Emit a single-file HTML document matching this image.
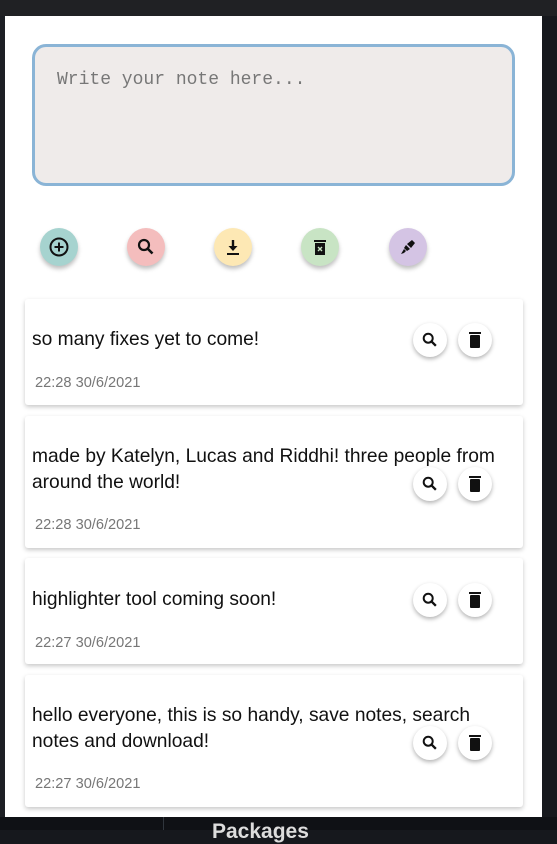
<!DOCTYPE html>
<html><head><style>
*{box-sizing:border-box;margin:0;padding:0}
body{width:557px;height:830px;background:#16181d;position:relative;overflow:hidden;font-family:"Segoe UI","Liberation Sans","DejaVu Sans",sans-serif}
.top{position:absolute;left:0;top:0;width:557px;height:16px;background:#202124}
.pop{position:absolute;left:5px;top:16px;width:537px;height:801px;background:#fff}
.ta{position:absolute;left:32px;top:44px;width:483px;height:142px;border:3px solid #8ab4d6;border-radius:14px;background:#efebea;font-family:"Liberation Mono",monospace;font-size:18px;color:#777;padding:23px 0 0 22px}
.b{position:absolute;width:38px;height:38px;border-radius:50%;top:228px;box-shadow:0 3px 4px rgba(0,0,0,.25);display:flex;align-items:center;justify-content:center}
.card{position:absolute;left:25px;width:498px;background:#fff;border-radius:3px;box-shadow:0 2px 5px rgba(0,0,0,.22)}
.t{position:absolute;left:7px;font-size:19.2px;color:#111;line-height:26px;white-space:nowrap}
.d{position:absolute;left:10px;font-size:14.6px;color:#777}
.cb{position:absolute;width:34px;height:34px;border-radius:50%;background:#fff;box-shadow:0 2px 4px rgba(0,0,0,.3);display:flex;align-items:center;justify-content:center}
</style></head><body>
<div class="top"></div>
<div style="position:absolute;left:0;top:16px;width:5px;height:814px;background:#1d1f24"></div>
<div class="pop"></div>
<div class="ta">Write your note here...</div>

<div class="b" style="left:40px;background:#a6d3cf"><svg width="22" height="22" viewBox="0 0 22 22"><circle cx="11" cy="11" r="8.5" fill="none" stroke="#111" stroke-width="2"/><path d="M11 6.5v9M6.5 11h9" stroke="#111" stroke-width="2"/></svg></div>
<div class="b" style="left:127px;background:#f4bdbd"><svg width="20" height="20" viewBox="0 0 20 20"><circle cx="8" cy="8" r="5" fill="none" stroke="#111" stroke-width="2.2"/><path d="M11.5 11.5l5 5" stroke="#111" stroke-width="2.6"/></svg></div>
<div class="b" style="left:214px;background:#fde8b4"><svg width="20" height="20" viewBox="0 0 20 20"><path d="M10 3v8" stroke="#111" stroke-width="2.4"/><path d="M5.5 9l4.5 5 4.5-5z" fill="#111"/><path d="M4 17h12" stroke="#111" stroke-width="2"/></svg></div>
<div class="b" style="left:301px;background:#c8e4c4"><svg width="20" height="20" viewBox="0 0 20 20"><rect x="4" y="3" width="12" height="2" fill="#111"/><rect x="5" y="6" width="10" height="12" fill="#111"/><path d="M8 10l4 4M12 10l-4 4" stroke="#c8e4c4" stroke-width="1.4"/></svg></div>
<div class="b" style="left:389px;background:#d4c4e4"><svg width="20" height="20" viewBox="0 0 20 20"><path d="M9 7l5-4 3 3-4 5z" fill="#111"/><path d="M8 8l4 4-3 2-3-3z" fill="#111"/><path d="M6 12l2 2-2 2-3 1z" fill="#111"/></svg></div>

<div class="card" style="top:299px;height:106px"><div class="t" style="top:28px">so many fixes yet to come!</div><div class="d" style="top:76px">22:28 30/6/2021</div></div>
<div class="card" style="top:416px;height:132px"><div class="t" style="top:28px">made by Katelyn, Lucas and Riddhi! three people from<br>around the world!</div><div class="d" style="top:101px">22:28 30/6/2021</div></div>
<div class="card" style="top:558px;height:106px"><div class="t" style="top:29px">highlighter tool coming soon!</div><div class="d" style="top:77px">22:27 30/6/2021</div></div>
<div class="card" style="top:675px;height:132px"><div class="t" style="top:28px">hello everyone, this is so handy, save notes, search<br>notes and download!</div><div class="d" style="top:101px">22:27 30/6/2021</div></div>

<div class="cb" style="left:413px;top:323px"><svg width="18" height="18" viewBox="0 0 20 20"><circle cx="8" cy="8" r="5" fill="none" stroke="#111" stroke-width="2.2"/><path d="M11.5 11.5l5 5" stroke="#111" stroke-width="2.6"/></svg></div>
<div class="cb" style="left:458px;top:323px"><svg width="16" height="18" viewBox="0 0 16 18"><rect x="2" y="1" width="12" height="2" fill="#111"/><rect x="3" y="4" width="10" height="13" rx="1" fill="#111"/></svg></div>
<div class="cb" style="left:413px;top:467px"><svg width="18" height="18" viewBox="0 0 20 20"><circle cx="8" cy="8" r="5" fill="none" stroke="#111" stroke-width="2.2"/><path d="M11.5 11.5l5 5" stroke="#111" stroke-width="2.6"/></svg></div>
<div class="cb" style="left:458px;top:467px"><svg width="16" height="18" viewBox="0 0 16 18"><rect x="2" y="1" width="12" height="2" fill="#111"/><rect x="3" y="4" width="10" height="13" rx="1" fill="#111"/></svg></div>
<div class="cb" style="left:413px;top:583px"><svg width="18" height="18" viewBox="0 0 20 20"><circle cx="8" cy="8" r="5" fill="none" stroke="#111" stroke-width="2.2"/><path d="M11.5 11.5l5 5" stroke="#111" stroke-width="2.6"/></svg></div>
<div class="cb" style="left:458px;top:583px"><svg width="16" height="18" viewBox="0 0 16 18"><rect x="2" y="1" width="12" height="2" fill="#111"/><rect x="3" y="4" width="10" height="13" rx="1" fill="#111"/></svg></div>
<div class="cb" style="left:413px;top:726px"><svg width="18" height="18" viewBox="0 0 20 20"><circle cx="8" cy="8" r="5" fill="none" stroke="#111" stroke-width="2.2"/><path d="M11.5 11.5l5 5" stroke="#111" stroke-width="2.6"/></svg></div>
<div class="cb" style="left:458px;top:726px"><svg width="16" height="18" viewBox="0 0 16 18"><rect x="2" y="1" width="12" height="2" fill="#111"/><rect x="3" y="4" width="10" height="13" rx="1" fill="#111"/></svg></div>
<div style="position:absolute;left:0;top:817px;width:557px;height:13px;background:#0f1115"></div>
<div style="position:absolute;left:163px;top:817px;width:1px;height:13px;background:#30363d"></div>
<div style="position:absolute;left:212px;top:820px;color:#ddd;font-size:21px;font-weight:bold">Packages</div>
</body></html>
